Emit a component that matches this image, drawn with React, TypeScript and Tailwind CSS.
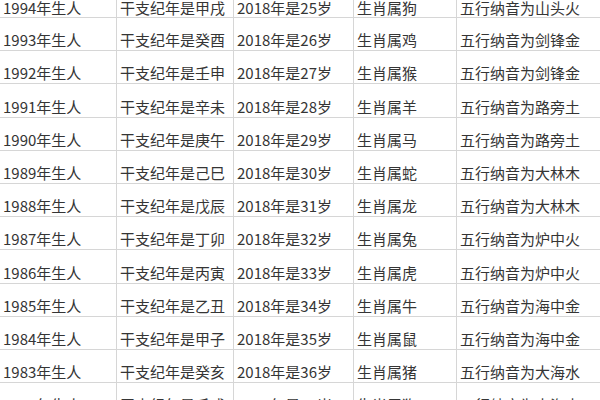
import React from 'react'

type Row = {
  year: number
  ganzhi: string
  age: number
  zodiac: string
  wuxing: string
}

const rows: Row[] = [
  { year: 1994, ganzhi: '甲戌', age: 25, zodiac: '狗', wuxing: '山头火' },
  { year: 1993, ganzhi: '癸酉', age: 26, zodiac: '鸡', wuxing: '剑锋金' },
  { year: 1992, ganzhi: '壬申', age: 27, zodiac: '猴', wuxing: '剑锋金' },
  { year: 1991, ganzhi: '辛未', age: 28, zodiac: '羊', wuxing: '路旁土' },
  { year: 1990, ganzhi: '庚午', age: 29, zodiac: '马', wuxing: '路旁土' },
  { year: 1989, ganzhi: '己巳', age: 30, zodiac: '蛇', wuxing: '大林木' },
  { year: 1988, ganzhi: '戊辰', age: 31, zodiac: '龙', wuxing: '大林木' },
  { year: 1987, ganzhi: '丁卯', age: 32, zodiac: '兔', wuxing: '炉中火' },
  { year: 1986, ganzhi: '丙寅', age: 33, zodiac: '虎', wuxing: '炉中火' },
  { year: 1985, ganzhi: '乙丑', age: 34, zodiac: '牛', wuxing: '海中金' },
  { year: 1984, ganzhi: '甲子', age: 35, zodiac: '鼠', wuxing: '海中金' },
  { year: 1983, ganzhi: '癸亥', age: 36, zodiac: '猪', wuxing: '大海水' },
  { year: 1982, ganzhi: '壬戌', age: 37, zodiac: '狗', wuxing: '大海水' },
]

const cell = 'flex items-end pb-[2px] pl-[3px] leading-[16px] whitespace-nowrap border-r border-[#d6d6d6]'

const App = () => {
  return (
    <div
      className="w-[600px] h-[400px] overflow-hidden bg-white text-[15px] text-[#353535]"
      style={{ fontFamily: '"Noto Sans CJK SC", "Noto Sans", sans-serif' }}
    >
      {rows.map((r, i) => (
        <div
          key={r.year}
          className={`grid grid-cols-[117px_117px_120px_103px_1fr] border-b border-[#d6d6d6] ${
            i === 0 ? 'h-[18px]' : 'h-[33.2px]'
          }`}
        >
          <div className={`${cell} pl-[2px]`}>{r.year}年生人</div>
          <div className={cell}>干支纪年是{r.ganzhi}</div>
          <div className={cell}>2018年是{r.age}岁</div>
          <div className={cell}>生肖属{r.zodiac}</div>
          <div className={`${cell} border-r-0`}>五行纳音为{r.wuxing}</div>
        </div>
      ))}
    </div>
  )
}

export default App
